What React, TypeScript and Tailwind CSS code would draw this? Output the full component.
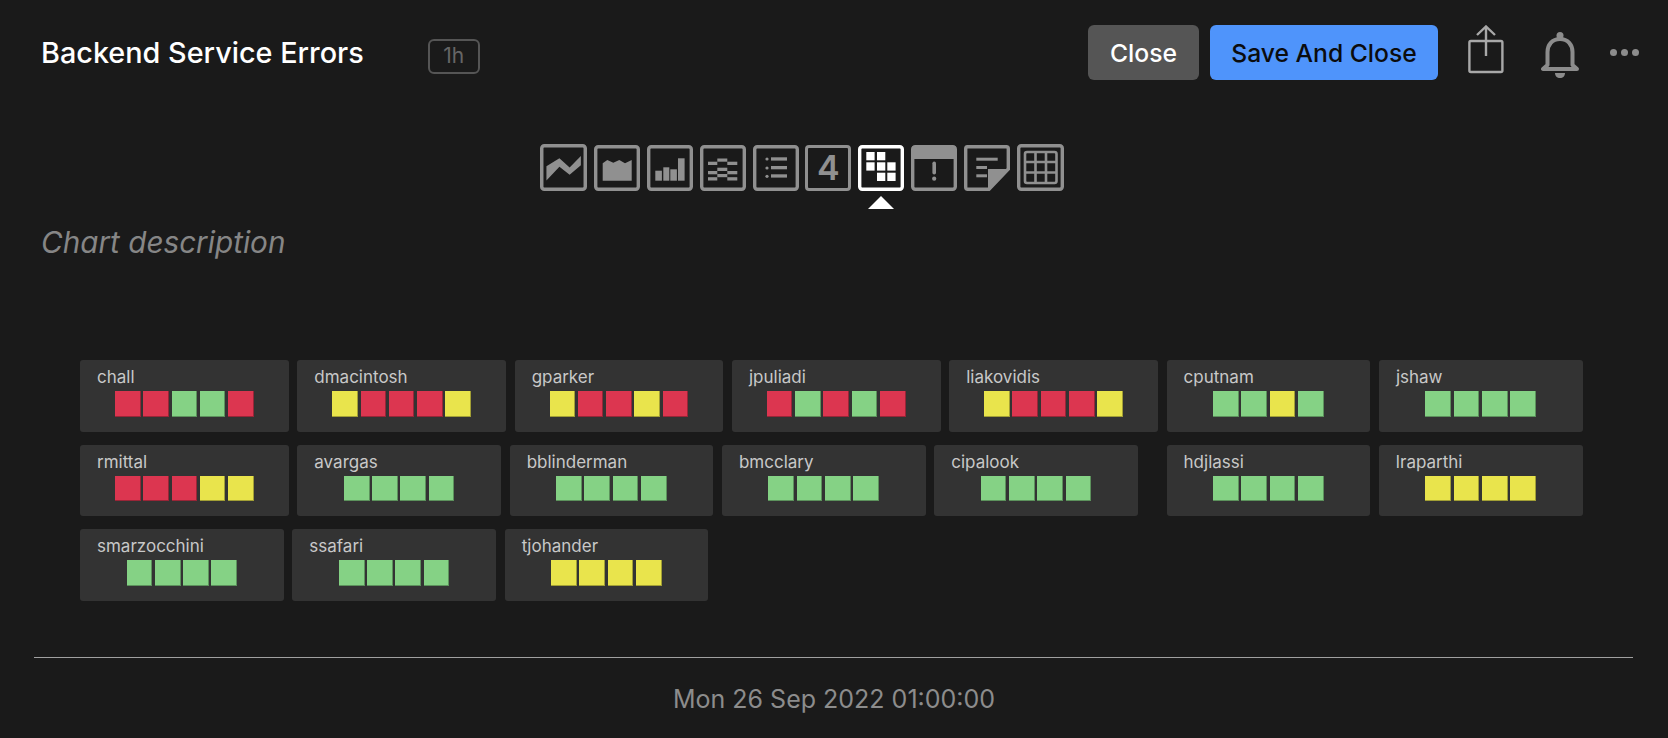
import React from "react";

const G = "bg-[#85d285]";
const R = "bg-[#dc3650]";
const Y = "bg-[#e9e44c]";

type Card = { name: string; cells: string[] };

const row1: Card[] = [
  { name: "chall", cells: [R, R, G, G, R] },
  { name: "dmacintosh", cells: [Y, R, R, R, Y] },
  { name: "gparker", cells: [Y, R, R, Y, R] },
  { name: "jpuliadi", cells: [R, G, R, G, R] },
  { name: "liakovidis", cells: [Y, R, R, R, Y] },
  { name: "cputnam", cells: [G, G, Y, G] },
  { name: "jshaw", cells: [G, G, G, G] },
];
const row2a: Card[] = [
  { name: "rmittal", cells: [R, R, R, Y, Y] },
  { name: "avargas", cells: [G, G, G, G] },
  { name: "bblinderman", cells: [G, G, G, G] },
  { name: "bmcclary", cells: [G, G, G, G] },
  { name: "cipalook", cells: [G, G, G, G] },
];
const row2b: Card[] = [
  { name: "hdjlassi", cells: [G, G, G, G] },
  { name: "lraparthi", cells: [Y, Y, Y, Y] },
];
const row3: Card[] = [
  { name: "smarzocchini", cells: [G, G, G, G] },
  { name: "ssafari", cells: [G, G, G, G] },
  { name: "tjohander", cells: [Y, Y, Y, Y] },
];

function HeatCard({ card }: { card: Card }) {
  return (
    <div
      className={
        (card.cells.length === 5 ? "w-[208.67px]" : "w-[203.67px]") +
        " h-[71.67px] shrink-0 rounded-[3px] bg-[#333333] flex flex-col"
      }
    >
      <div className="pl-[17px] pt-[8px] h-[31px] text-[17px] leading-[18px] text-[#c8c8c8]">{card.name}</div>
      <div className="flex justify-center gap-[2.67px]">
        {card.cells.map((c, i) => (
          <div key={i} className={c + " w-[25.67px] h-[25.67px] border-r border-b border-black/30"} />
        ))}
      </div>
    </div>
  );
}

function Box({ children, active, wide }: { children: React.ReactNode; active?: boolean; wide?: boolean }) {
  return (
    <div className={(wide ? "w-[47px] h-[47px] " : "w-[46px] h-[46px] ") + (active ? "text-white" : "text-[#909090]") + " relative shrink-0"}>
      <svg width="100%" height="100%" viewBox="0 0 46 46" fill="none">
        <rect x="1.7" y="1.7" width="42.6" height="42.6" rx="2.5" stroke="currentColor" strokeWidth="3.4" />
        {children}
      </svg>
    </div>
  );
}

function Toolbar() {
  return (
    <div className="flex justify-center items-center gap-[6.8px] pr-[64px] mt-[64px] h-[47px]">
      <Box wide>
        <polygon fill="currentColor" points="6.3,35.7 6.3,21.7 19,14 29,23 40,11.7 40,20.7 29,30 19,22.3" />
      </Box>
      <Box>
        <polygon fill="currentColor" points="8.7,35.7 8.7,18.3 13.3,15 19.3,17.7 25.3,15 31,18.3 37.7,15 37.7,35.7" />
      </Box>
      <Box>
        <g fill="currentColor">
          <rect x="8.3" y="25.7" width="6.6" height="10" />
          <rect x="16.3" y="22.3" width="6" height="13.4" />
          <rect x="23.3" y="24.3" width="6.6" height="11.4" />
          <rect x="31" y="13.3" width="6.6" height="22.4" />
        </g>
      </Box>
      <Box>
        <g fill="currentColor">
          <rect x="17.3" y="13.5" width="10" height="3.2" />
          <rect x="8" y="16.7" width="9.3" height="3.3" />
          <rect x="27.3" y="16.7" width="10" height="3.3" />
          <rect x="17.3" y="22.7" width="10" height="3.3" />
          <rect x="8" y="26" width="9.3" height="3.3" />
          <rect x="27.3" y="26" width="10" height="3.3" />
          <rect x="17.3" y="29" width="10" height="3.2" />
          <rect x="8" y="32.2" width="9.3" height="3.3" />
          <rect x="27.3" y="32.2" width="10" height="3.3" />
        </g>
      </Box>
      <Box>
        <g fill="currentColor">
          <circle cx="14" cy="14" r="1.6" />
          <circle cx="14" cy="23" r="1.6" />
          <circle cx="14" cy="31.3" r="1.6" />
          <rect x="18" y="12.3" width="16" height="3.3" />
          <rect x="18" y="21" width="16" height="3.3" />
          <rect x="18" y="29.3" width="16" height="3.3" />
        </g>
      </Box>
      <div className="relative w-[46px] h-[46px] shrink-0 rounded-[4px] border-[3.4px] border-[#909090] flex items-center justify-center text-[34px] leading-none font-semibold text-[#909090]">
        4
      </div>
      <div className="relative">
        <Box active>
          <g fill="currentColor">
            <rect x="8.3" y="7" width="8.3" height="8.3" />
            <rect x="19" y="7" width="8.3" height="8.3" />
            <rect x="8.3" y="17.3" width="8.3" height="8.3" />
            <rect x="19" y="17.3" width="8.3" height="8.3" />
            <rect x="29.3" y="17.3" width="8.3" height="8.3" />
            <rect x="19" y="27.7" width="8.3" height="8.3" />
            <rect x="29.3" y="27.7" width="8.3" height="8.3" />
          </g>
        </Box>
        <svg className="absolute left-[10px] top-[51px]" width="26" height="13" viewBox="0 0 26 13">
          <polygon points="13,0 26,13 0,13" fill="#ffffff" />
        </svg>
      </div>
      <Box>
        <g fill="currentColor">
          <rect x="1" y="1" width="44" height="13" rx="1.5" />
          <rect x="21.4" y="16.5" width="3.6" height="13" rx="1.8" />
          <circle cx="23.2" cy="33.7" r="2.1" />
        </g>
      </Box>
      <div className="w-[46px] h-[46px] shrink-0 text-[#909090]">
        <svg width="46" height="46" viewBox="0 0 46 46" fill="none">
          <path d="M3.5 1.7H42.3A2 2 0 0 1 44.3 3.7V24L25 44.3H3.7A2 2 0 0 1 1.7 42.3V3.7A2 2 0 0 1 3.5 1.7Z" stroke="currentColor" strokeWidth="3.4" />
          <g fill="currentColor">
            <polygon points="24,24 45,24 25,45 24,45" />
            <rect x="12.3" y="12.7" width="21.4" height="3" />
            <rect x="12.3" y="21" width="10.7" height="3" />
            <rect x="12.3" y="29.3" width="10.7" height="3" />
          </g>
        </svg>
      </div>
      <div className="w-[47px] h-[47px] shrink-0 text-[#909090]">
        <svg width="47" height="47" viewBox="0 0 47 47" fill="none" stroke="currentColor">
          <rect x="1.7" y="1.7" width="43.6" height="43.6" rx="2.5" strokeWidth="3.4" />
          <rect x="8" y="8" width="31.5" height="31" rx="2" strokeWidth="2.6" />
          <path d="M18.5 8V39M29 8V39M8 18H39.5M8 28.5H39.5" strokeWidth="2.6" />
        </svg>
      </div>
    </div>
  );
}

export default function App() {
  return (
    <div className="w-[1668px] h-[738px] overflow-hidden bg-[#1a1a1a] [font-family:Inter,sans-serif] flex flex-col">
      <header className="flex items-center h-[55px] mt-[25px] pl-[41px] pr-[29px]">
        <div className="text-[28.8px] leading-[32px] font-medium text-white">Backend Service Errors</div>
        <div className="ml-[64px] mt-[7px] w-[52px] h-[35px] rounded-[6px] border-2 border-[#555555] flex items-center justify-center text-[21px] text-[#666666]">
          1h
        </div>
        <button className="ml-auto w-[111px] h-[55px] pt-[2px] rounded-[6px] bg-[#555555] text-white text-[24.7px] font-medium">Close</button>
        <button className="ml-[11px] w-[228px] h-[55px] pt-[2px] rounded-[6px] bg-[#4f94fb] text-[#0b0c0e] text-[24.7px] font-medium">Save And Close</button>
        <svg className="ml-[30px] mb-[6px] shrink-0" width="36" height="49" viewBox="0 0 36 49" fill="none" stroke="#a8a8a8" strokeWidth="2.4">
          <rect x="1.4" y="16" width="33" height="31" rx="1.5" />
          <path d="M18 1.5V31M9 10L18 1.5L27 10" />
        </svg>
        <svg className="ml-[37px] mt-[4px] shrink-0" width="38" height="46" viewBox="0 0 38 46" fill="none">
          <path d="M19 7C11 7 6.5 13 6.5 20V33L2 37H36L31.5 33V20C31.5 13 27 7 19 7Z" stroke="#8c8c8c" strokeWidth="4" strokeLinejoin="round" />
          <circle cx="19" cy="3.5" r="3.5" fill="#8c8c8c" />
          <path d="M14 41H24C24 44 22 46 19 46C16 46 14 44 14 41Z" fill="#8c8c8c" />
        </svg>
        <div className="ml-[31px] flex gap-[4px] shrink-0">
          <div className="w-[7px] h-[7px] rounded-full bg-[#8c8c8c]" />
          <div className="w-[7px] h-[7px] rounded-full bg-[#8c8c8c]" />
          <div className="w-[7px] h-[7px] rounded-full bg-[#8c8c8c]" />
        </div>
      </header>

      <Toolbar />

      <div className="mt-[33px] pl-[41px] text-[29.7px] leading-[36px] italic text-[#868686]">Chart description</div>

      <main className="mt-[100px] pl-[80px] flex flex-col gap-[13px]">
        <div className="flex gap-[8.67px]">
          {row1.map((c) => (
            <HeatCard key={c.name} card={c} />
          ))}
        </div>
        <div className="flex gap-[8.67px]">
          {row2a.map((c) => (
            <HeatCard key={c.name} card={c} />
          ))}
          <div className="w-[11.33px] shrink-0" />
          {row2b.map((c) => (
            <HeatCard key={c.name} card={c} />
          ))}
        </div>
        <div className="flex gap-[8.67px]">
          {row3.map((c) => (
            <HeatCard key={c.name} card={c} />
          ))}
        </div>
      </main>

      <div className="mt-[56px] ml-[34px] mr-[35px] h-[1.5px] bg-[#a0a0a0]" />
      <div className="mt-[25px] text-center text-[25px] leading-[32px] text-[#8c8c8c]">Mon 26 Sep 2022 01:00:00</div>
    </div>
  );
}
